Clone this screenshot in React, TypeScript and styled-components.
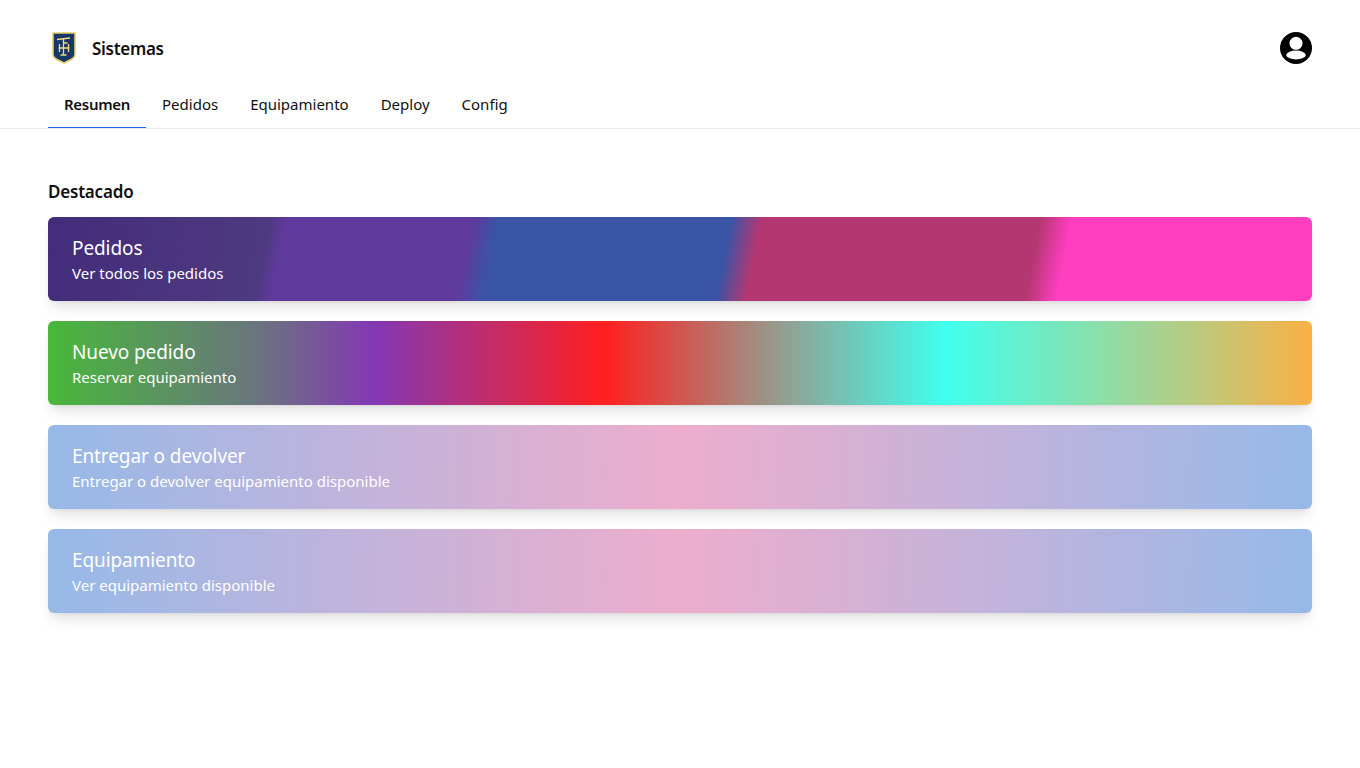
import React from "react";
import styled, { createGlobalStyle } from "styled-components";

const GlobalStyle = createGlobalStyle`
  html, body {
    margin: 0;
    padding: 0;
    background: #fff;
    color: #111827;
    font-family: "Noto Sans", "Open Sans", sans-serif;
  }
`;

const Page = styled.div`
  min-height: 768px;
  box-sizing: border-box;
`;

const Header = styled.header`
  height: 128px;
  border-bottom: 1px solid #e5e7eb;
  padding: 0 48px;
  display: flex;
  flex-direction: column;
`;

const TopRow = styled.div`
  height: 80px;
  padding-top: 16px;
  box-sizing: border-box;
  display: flex;
  align-items: center;
  justify-content: space-between;
`;

const Brand = styled.div`
  display: flex;
  align-items: center;
  gap: 12px;
`;

const BrandName = styled.span`
  font-size: 17px;
  font-weight: 600;
  color: #111;
  letter-spacing: -0.3px;
  padding-top: 1px;
`;

const Tabs = styled.nav`
  display: flex;
  height: 49px;
`;

interface TabProps {
  readonly $active?: boolean;
}

const Tab = styled.a<TabProps>`
  position: relative;
  padding: 1px 16px 0;
  height: 49px;
  box-sizing: border-box;
  display: flex;
  align-items: center;
  font-size: 15px;
  letter-spacing: ${({ $active }) => ($active ? "-0.3px" : "0")};
  font-weight: ${({ $active }) => ($active ? 600 : 400)};
  color: #111;

  &::after {
    content: "";
    position: absolute;
    left: 0;
    right: 0;
    bottom: 0;
    height: 1px;
    background: ${({ $active }) => ($active ? "#1f66ee" : "transparent")};
  }
`;

const Main = styled.main`
  padding: 50px 48px 0;
`;

const SectionTitle = styled.h2`
  margin: 0 0 12px;
  height: 26px;
  line-height: 26px;
  font-size: 17px;
  font-weight: 600;
  letter-spacing: -0.2px;
  color: #111;
`;

const CardList = styled.div`
  display: flex;
  flex-direction: column;
  gap: 20px;
`;

interface CardProps {
  readonly $gradient: string;
}

const Card = styled.a<CardProps>`
  display: flex;
  flex-direction: column;
  justify-content: center;
  height: 84px;
  padding: 0 24px 1px;
  box-sizing: border-box;
  border-radius: 6px;
  color: #fff;
  background: ${({ $gradient }) => $gradient};
  box-shadow: 0 10px 15px -3px rgba(0, 0, 0, 0.1), 0 4px 6px -4px rgba(0, 0, 0, 0.1);
`;

const CardTitle = styled.span`
  font-size: 19px;
  line-height: 28px;
  letter-spacing: -0.1px;
`;

const CardText = styled.span`
  font-size: 15px;
  line-height: 22px;
`;

const PEDIDOS = `linear-gradient(101deg,
  #432c7a 0%, #4e3a80 17.4%, #5f3a9c 18.6%, #5f3a9c 33.2%, #3a54a6 35.2%,
  #3a54a6 53.4%, #b53772 55.8%, #b53772 77.6%, #ff3ec0 80%, #ff3ec0 100%)`;
const NUEVO = `linear-gradient(90deg,
  #48b83a 0%, #6b7280 17%, #8338b4 25.8%, #ff1f1f 44%, #939e90 58%, #40ffee 71%, #b5cc84 90%, #fab044 100%)`;
const SOFT = `linear-gradient(92deg, #96b9e8 0%, #edadcd 50%, #96b9e8 100%)`;

const cards = [
  { title: "Pedidos", text: "Ver todos los pedidos", gradient: PEDIDOS },
  { title: "Nuevo pedido", text: "Reservar equipamiento", gradient: NUEVO },
  { title: "Entregar o devolver", text: "Entregar o devolver equipamiento disponible", gradient: SOFT },
  { title: "Equipamiento", text: "Ver equipamiento disponible", gradient: SOFT },
];

const tabs = ["Resumen", "Pedidos", "Equipamiento", "Deploy", "Config"];

function Logo() {
  return (
    <svg width="32" height="40" viewBox="0 0 32 40" fill="none">
      <path d="M5 5h22v21.500c0 2.500-1.500 3.800-4 5l-7 3.500-7-3.500c-2.500-1.200-4-2.500-4-5z" fill="#173766" stroke="#e6cc6c" strokeWidth="1.600" />
      <path d="M9 11.500l13-1.500M15.500 10v17M12.500 27h6M15.500 15h4M10.500 20h11M11.500 16v8M20.500 16v8" stroke="#f0dc84" strokeWidth="1.300" />
    </svg>
  );
}

function UserIcon() {
  return (
    <svg width="32" height="32" viewBox="0 0 32 32">
      <circle cx="16" cy="16" r="16" fill="#000" />
      <circle cx="16" cy="11.300" r="6.500" fill="#fff" />
      <ellipse cx="16" cy="23" rx="9.800" ry="4.400" fill="#fff" />
    </svg>
  );
}

export default function App() {
  return (
    <Page>
      <GlobalStyle />
      <Header>
        <TopRow>
          <Brand>
            <Logo />
            <BrandName>Sistemas</BrandName>
          </Brand>
          <UserIcon />
        </TopRow>
        <Tabs>
          {tabs.map((tab, i) => (
            <Tab key={tab} $active={i === 0}>
              {tab}
            </Tab>
          ))}
        </Tabs>
      </Header>
      <Main>
        <SectionTitle>Destacado</SectionTitle>
        <CardList>
          {cards.map((card) => (
            <Card key={card.title} $gradient={card.gradient}>
              <CardTitle>{card.title}</CardTitle>
              <CardText>{card.text}</CardText>
            </Card>
          ))}
        </CardList>
      </Main>
    </Page>
  );
}
